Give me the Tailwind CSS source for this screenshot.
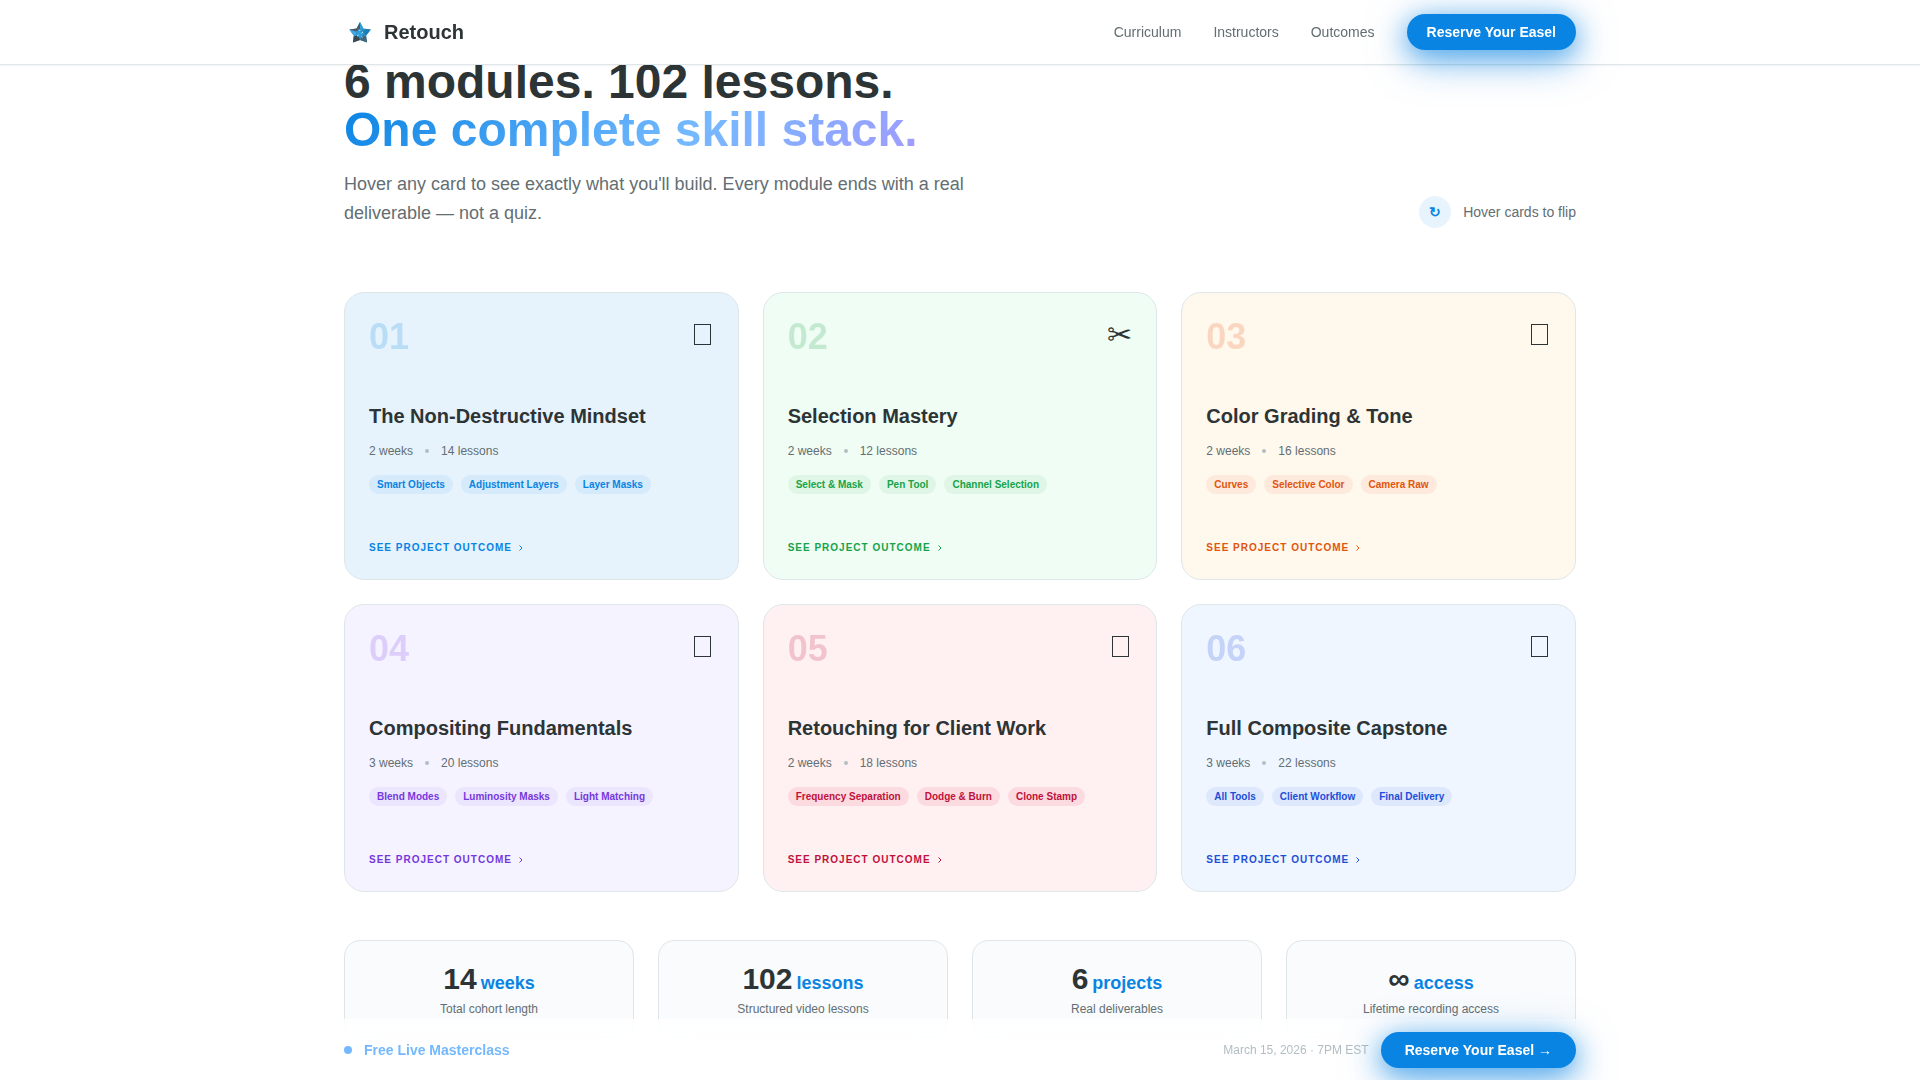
<!DOCTYPE html>
<html lang="en">
<head>
  <meta charset="UTF-8">
  <meta name="viewport" content="width=device-width, initial-scale=1.0">
  <title>Retouch</title>
  <script src="https://cdn.jsdelivr.net/npm/@tailwindcss/browser@4"></script>
</head>
<body class="bg-white font-['Liberation_Sans',Arial,sans-serif] text-[#2d3436]">
  <!-- Navbar -->
  <header class="fixed top-0 inset-x-0 z-50 bg-white border-b border-[#dfe6e9] shadow-[0_1px_2px_rgba(45,52,54,0.06)]">
    <div class="max-w-[1280px] mx-auto px-6 h-16 flex justify-between items-center">
      <a href="#" class="flex items-center gap-2 text-xl font-bold">
        <svg class="w-8 h-8" viewBox="0 0 32 32" aria-hidden="true">
          <path d="M16 6l3.400 6.400 7.400 1.100-4.600 6 .8 7-7-2.600-7 2.600.7-7-4.300-6 7.200-1.100z" fill="#2f8fc4"/>
          <path d="M16 6l-3.400 6.400-7.200 1.100L11 16l5-3z" fill="#4b5a66"/>
          <path d="M16 6l3.400 6.400L16 14z" fill="#2ba3d8"/>
          <path d="M26.800 13.500l-4.600 6-3-3.500 2-3z" fill="#1c7fb8"/>
          <path d="M9 26.500l.7-6 4.300-1 2 4.400z" fill="#3b4650"/>
          <path d="M23 26.500l-.8-6-3.200-1-3 4.400z" fill="#4a6474"/>
          <path d="M5.400 13.500l4.300 6 3-1-1-3z" fill="#45a5dd"/>
          <path d="M12.500 15.500l3-1.500 1 2 2.500-.5-1 3 1 2-3-.5-2.500 1.500.5-2.500z" fill="#2b9fe0"/>
          <path d="M15 13.500l1.200 1.500M19 16l-1.500 1.200M13 20l1.500-1M17.500 20.500l.8 1" stroke="#c9ecfb" stroke-width="1"/>
        </svg>
        Retouch
      </a>
      <nav class="flex items-center gap-8 text-sm text-[#636e72]">
        <a href="#curriculum" class="hover:text-[#0984e3]">Curriculum</a>
        <a href="#instructors" class="hover:text-[#0984e3]">Instructors</a>
        <a href="#outcomes" class="hover:text-[#0984e3]">Outcomes</a>
        <button class="h-9 px-5 rounded-full bg-[#0984e3] text-white font-bold shadow-[0_10px_40px_rgba(9,132,227,0.5),0_6px_24px_rgba(9,132,227,0.5)]">Reserve Your Easel</button>
      </nav>
    </div>
  </header>

  <main id="curriculum" class="max-w-[1280px] mx-auto px-6 pt-[58px] pb-24">
    <!-- Heading -->
    <div class="flex justify-between items-end mb-16">
      <div>
        <h2 class="text-5xl leading-none font-bold">
          6 modules. 102 lessons.<br>
          <span class="text-transparent bg-clip-text bg-[linear-gradient(135deg,#0984e3_0%,#74b9ff_60%,#a29bfe_100%)]">One complete skill stack.</span>
        </h2>
        <p class="mt-4 max-w-2xl text-lg leading-[29px] text-[#636e72]">Hover any card to see exactly what you'll build. Every module ends with a real deliverable — not a quiz.</p>
      </div>
      <div class="flex items-center gap-3 text-sm text-[#636e72]">
        <span class="w-8 h-8 rounded-full bg-[#e8f4fd] text-[#0984e3] font-bold flex items-center justify-center">↻</span>
        Hover cards to flip
      </div>
    </div>

    <!-- Modules -->
    <div class="grid grid-cols-3 gap-6">
      <article class="min-h-72 p-6 flex flex-col items-start rounded-[20px] border border-[#dfe6e9] bg-[#e6f3fd]">
        <div class="w-full h-10 flex justify-between items-start">
          <span class="text-4xl leading-10 font-bold text-[#0984e3] opacity-20">01</span>
          <svg class="w-[21px] h-9" viewBox="0 0 21 36" fill="none" stroke="#2d3436" aria-hidden="true"><rect x="1.500" y="7.500" width="16" height="20"/></svg>
        </div>
        <h3 class="mt-[47px] text-xl leading-[25px] font-bold">The Non-Destructive Mindset</h3>
        <div class="mt-3.5 flex items-center gap-3 text-xs text-[#636e72]">
          <span>2 weeks</span><span class="w-1 h-1 rounded-full bg-[#b2bec3]"></span><span>14 lessons</span>
        </div>
        <div class="mt-4 flex gap-2 text-[10px] leading-[15px] font-bold text-[#0984e3]">
          <span class="px-2 py-0.5 rounded-full bg-[#0984e3]/8">Smart Objects</span>
          <span class="px-2 py-0.5 rounded-full bg-[#0984e3]/8">Adjustment Layers</span>
          <span class="px-2 py-0.5 rounded-full bg-[#0984e3]/8">Layer Masks</span>
        </div>
        <button class="mt-auto flex items-center gap-1 text-[10px] leading-[15px] font-bold tracking-[1px] uppercase text-[#0984e3]">
          See project outcome
          <svg class="w-3 h-3" viewBox="0 0 12 12" fill="none" stroke="currentColor" aria-hidden="true"><path d="M3.500 3.500l2.500 2.500-2.500 2.500"/></svg>
        </button>
      </article>

      <article class="min-h-72 p-6 flex flex-col items-start rounded-[20px] border border-[#dfe6e9] bg-[#f0fdf4]">
        <div class="w-full h-10 flex justify-between items-start">
          <span class="text-4xl leading-10 font-bold text-[#16a34a] opacity-20">02</span>
          <span class="text-3xl leading-9">✂</span>
        </div>
        <h3 class="mt-[47px] text-xl leading-[25px] font-bold">Selection Mastery</h3>
        <div class="mt-3.5 flex items-center gap-3 text-xs text-[#636e72]">
          <span>2 weeks</span><span class="w-1 h-1 rounded-full bg-[#b2bec3]"></span><span>12 lessons</span>
        </div>
        <div class="mt-4 flex gap-2 text-[10px] leading-[15px] font-bold text-[#16a34a]">
          <span class="px-2 py-0.5 rounded-full bg-[#16a34a]/8">Select &amp; Mask</span>
          <span class="px-2 py-0.5 rounded-full bg-[#16a34a]/8">Pen Tool</span>
          <span class="px-2 py-0.5 rounded-full bg-[#16a34a]/8">Channel Selection</span>
        </div>
        <button class="mt-auto flex items-center gap-1 text-[10px] leading-[15px] font-bold tracking-[1px] uppercase text-[#16a34a]">
          See project outcome
          <svg class="w-3 h-3" viewBox="0 0 12 12" fill="none" stroke="currentColor" aria-hidden="true"><path d="M3.500 3.500l2.500 2.500-2.500 2.500"/></svg>
        </button>
      </article>

      <article class="min-h-72 p-6 flex flex-col items-start rounded-[20px] border border-[#dfe6e9] bg-[#fff8ec]">
        <div class="w-full h-10 flex justify-between items-start">
          <span class="text-4xl leading-10 font-bold text-[#e8541a] opacity-20">03</span>
          <svg class="w-[21px] h-9" viewBox="0 0 21 36" fill="none" stroke="#2d3436" aria-hidden="true"><rect x="1.500" y="7.500" width="16" height="20"/></svg>
        </div>
        <h3 class="mt-[47px] text-xl leading-[25px] font-bold">Color Grading &amp; Tone</h3>
        <div class="mt-3.5 flex items-center gap-3 text-xs text-[#636e72]">
          <span>2 weeks</span><span class="w-1 h-1 rounded-full bg-[#b2bec3]"></span><span>16 lessons</span>
        </div>
        <div class="mt-4 flex gap-2 text-[10px] leading-[15px] font-bold text-[#e0550f]">
          <span class="px-2 py-0.5 rounded-full bg-[#f04a2a]/8">Curves</span>
          <span class="px-2 py-0.5 rounded-full bg-[#f04a2a]/8">Selective Color</span>
          <span class="px-2 py-0.5 rounded-full bg-[#f04a2a]/8">Camera Raw</span>
        </div>
        <button class="mt-auto flex items-center gap-1 text-[10px] leading-[15px] font-bold tracking-[1px] uppercase text-[#e0550f]">
          See project outcome
          <svg class="w-3 h-3" viewBox="0 0 12 12" fill="none" stroke="currentColor" aria-hidden="true"><path d="M3.500 3.500l2.500 2.500-2.500 2.500"/></svg>
        </button>
      </article>

      <article class="min-h-72 p-6 flex flex-col items-start rounded-[20px] border border-[#dfe6e9] bg-[#f5f3ff]">
        <div class="w-full h-10 flex justify-between items-start">
          <span class="text-4xl leading-10 font-bold text-[#7c3aed] opacity-20">04</span>
          <svg class="w-[21px] h-9" viewBox="0 0 21 36" fill="none" stroke="#2d3436" aria-hidden="true"><rect x="1.500" y="7.500" width="16" height="20"/></svg>
        </div>
        <h3 class="mt-[47px] text-xl leading-[25px] font-bold">Compositing Fundamentals</h3>
        <div class="mt-3.5 flex items-center gap-3 text-xs text-[#636e72]">
          <span>3 weeks</span><span class="w-1 h-1 rounded-full bg-[#b2bec3]"></span><span>20 lessons</span>
        </div>
        <div class="mt-4 flex gap-2 text-[10px] leading-[15px] font-bold text-[#7638dd]">
          <span class="px-2 py-0.5 rounded-full bg-[#7c3aed]/8">Blend Modes</span>
          <span class="px-2 py-0.5 rounded-full bg-[#7c3aed]/8">Luminosity Masks</span>
          <span class="px-2 py-0.5 rounded-full bg-[#7c3aed]/8">Light Matching</span>
        </div>
        <button class="mt-auto flex items-center gap-1 text-[10px] leading-[15px] font-bold tracking-[1px] uppercase text-[#7638dd]">
          See project outcome
          <svg class="w-3 h-3" viewBox="0 0 12 12" fill="none" stroke="currentColor" aria-hidden="true"><path d="M3.500 3.500l2.500 2.500-2.500 2.500"/></svg>
        </button>
      </article>

      <article class="min-h-72 p-6 flex flex-col items-start rounded-[20px] border border-[#dfe6e9] bg-[#fff1f2]">
        <div class="w-full h-10 flex justify-between items-start">
          <span class="text-4xl leading-10 font-bold text-[#be123c] opacity-20">05</span>
          <svg class="w-[21px] h-9" viewBox="0 0 21 36" fill="none" stroke="#2d3436" aria-hidden="true"><rect x="1.500" y="7.500" width="16" height="20"/></svg>
        </div>
        <h3 class="mt-[47px] text-xl leading-[25px] font-bold">Retouching for Client Work</h3>
        <div class="mt-3.5 flex items-center gap-3 text-xs text-[#636e72]">
          <span>2 weeks</span><span class="w-1 h-1 rounded-full bg-[#b2bec3]"></span><span>18 lessons</span>
        </div>
        <div class="mt-4 flex gap-2 text-[10px] leading-[15px] font-bold text-[#be123c]">
          <span class="px-2 py-0.5 rounded-full bg-[#e11d48]/10">Frequency Separation</span>
          <span class="px-2 py-0.5 rounded-full bg-[#e11d48]/10">Dodge &amp; Burn</span>
          <span class="px-2 py-0.5 rounded-full bg-[#e11d48]/10">Clone Stamp</span>
        </div>
        <button class="mt-auto flex items-center gap-1 text-[10px] leading-[15px] font-bold tracking-[1px] uppercase text-[#be123c]">
          See project outcome
          <svg class="w-3 h-3" viewBox="0 0 12 12" fill="none" stroke="currentColor" aria-hidden="true"><path d="M3.500 3.500l2.500 2.500-2.500 2.500"/></svg>
        </button>
      </article>

      <article class="min-h-72 p-6 flex flex-col items-start rounded-[20px] border border-[#dfe6e9] bg-[#eff6ff]">
        <div class="w-full h-10 flex justify-between items-start">
          <span class="text-4xl leading-10 font-bold text-[#1d4ed8] opacity-20">06</span>
          <svg class="w-[21px] h-9" viewBox="0 0 21 36" fill="none" stroke="#2d3436" aria-hidden="true"><rect x="1.500" y="7.500" width="16" height="20"/></svg>
        </div>
        <h3 class="mt-[47px] text-xl leading-[25px] font-bold">Full Composite Capstone</h3>
        <div class="mt-3.5 flex items-center gap-3 text-xs text-[#636e72]">
          <span>3 weeks</span><span class="w-1 h-1 rounded-full bg-[#b2bec3]"></span><span>22 lessons</span>
        </div>
        <div class="mt-4 flex gap-2 text-[10px] leading-[15px] font-bold text-[#1d4ed8]">
          <span class="px-2 py-0.5 rounded-full bg-[#1d4ed8]/8">All Tools</span>
          <span class="px-2 py-0.5 rounded-full bg-[#1d4ed8]/8">Client Workflow</span>
          <span class="px-2 py-0.5 rounded-full bg-[#1d4ed8]/8">Final Delivery</span>
        </div>
        <button class="mt-auto flex items-center gap-1 text-[10px] leading-[15px] font-bold tracking-[1px] uppercase text-[#1d4ed8]">
          See project outcome
          <svg class="w-3 h-3" viewBox="0 0 12 12" fill="none" stroke="currentColor" aria-hidden="true"><path d="M3.500 3.500l2.500 2.500-2.500 2.500"/></svg>
        </button>
      </article>
    </div>

    <!-- Stats -->
    <div class="mt-12 grid grid-cols-4 gap-6 text-center">
      <div class="p-5 rounded-2xl border border-[#dfe6e9] bg-[#f9fbfd]">
        <div class="text-3xl font-bold">14<span class="ml-1 text-lg text-[#0984e3]">weeks</span></div>
        <div class="mt-1 text-xs text-[#636e72]">Total cohort length</div>
      </div>
      <div class="p-5 rounded-2xl border border-[#dfe6e9] bg-[#f9fbfd]">
        <div class="text-3xl font-bold">102<span class="ml-1 text-lg text-[#0984e3]">lessons</span></div>
        <div class="mt-1 text-xs text-[#636e72]">Structured video lessons</div>
      </div>
      <div class="p-5 rounded-2xl border border-[#dfe6e9] bg-[#f9fbfd]">
        <div class="text-3xl font-bold">6<span class="ml-1 text-lg text-[#0984e3]">projects</span></div>
        <div class="mt-1 text-xs text-[#636e72]">Real deliverables</div>
      </div>
      <div class="p-5 rounded-2xl border border-[#dfe6e9] bg-[#f9fbfd]">
        <div class="text-3xl font-bold">∞<span class="ml-1 text-lg text-[#0984e3]">access</span></div>
        <div class="mt-1 text-xs text-[#636e72]">Lifetime recording access</div>
      </div>
    </div>
  </main>

  <!-- Sticky bar -->
  <div class="fixed bottom-0 inset-x-0 z-40 bg-white/70 backdrop-blur-xl border-t border-white/10">
    <div class="max-w-[1280px] mx-auto px-6 py-3 flex justify-between items-center">
      <div class="flex items-center gap-3 text-sm font-bold text-[#74b9ff]">
        <span class="w-2 h-2 rounded-full bg-[#74b9ff]"></span>
        Free Live Masterclass
      </div>
      <div class="flex items-center gap-3">
        <span class="text-xs text-[#b2bec3]">March 15, 2026 · 7PM EST</span>
        <button class="h-9 px-6 rounded-full bg-[#0984e3] text-white text-sm font-bold shadow-[0_10px_40px_rgba(9,132,227,0.5),0_6px_24px_rgba(9,132,227,0.5)]">Reserve Your Easel →</button>
      </div>
    </div>
  </div>
</body>
</html>
